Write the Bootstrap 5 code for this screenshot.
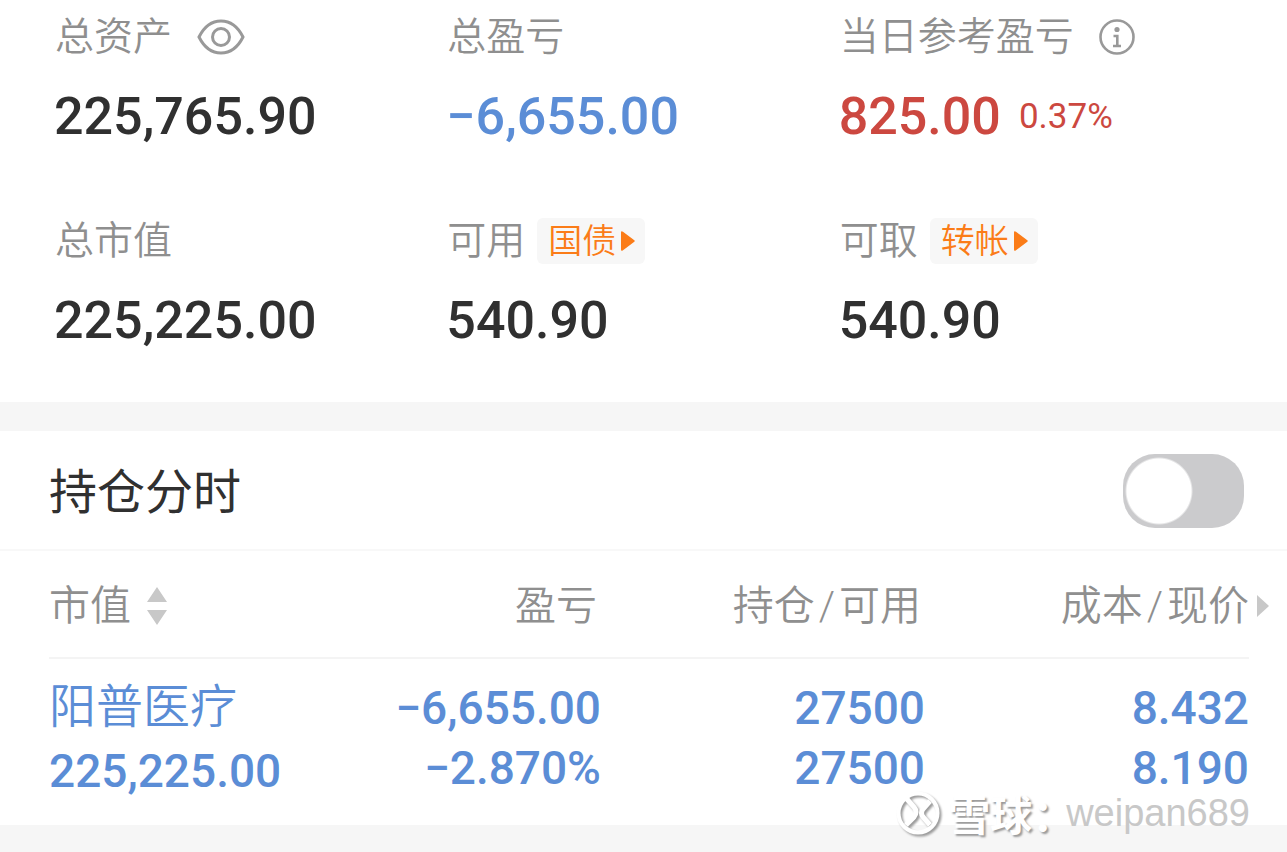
<!DOCTYPE html>
<html lang="zh-CN">
<head>
<meta charset="utf-8">
<meta name="viewport" content="width=device-width, initial-scale=1">
<title>持仓</title>
<link href="https://cdn.jsdelivr.net/npm/bootstrap@5.3.0/dist/css/bootstrap.min.css" rel="stylesheet">
<style>
  :root { --ink: #303030; --muted: #8f8f8f; --loss: #5b8dd6; --gain: #cc4840; --accent: #fb7c18; --band: #f6f6f6; }
  body { background: var(--band); color: var(--ink); font-family: Roboto, "Noto Sans CJK SC", sans-serif; }
  .overview { padding: 12px 55px 49px; }
  .overview .row { row-gap: 67px; }
  .caption { font-size: 39px; line-height: 50px; font-weight: 350; color: var(--muted); white-space: nowrap; }
  .amount { font-size: 52px; line-height: 64px; font-weight: 500; margin-top: 23px; margin-left: -1px; white-space: nowrap; }
  .amount-rate { font-size: 35px; font-weight: 400; margin-left: 18px; }
  .loss { color: var(--loss); }
  .gain { color: var(--gain); }
  .icon-btn { border: 0; padding: 0; background: none; display: flex; margin-left: 25px; }
  .tag-btn { border: 0; background: #f7f7f7; color: var(--accent); border-radius: 6px; font-size: 34px; line-height: 46px; font-weight: 350; padding: 0 10px 0 11px; margin-left: 12px; display: flex; align-items: center; gap: 5px; }
  .holdings { margin-top: 29px; }
  .chart-row { padding: 0 43px 0 49px; height: 120px; border-bottom: 2px solid #f8f8f8; }
  .chart-row label { font-size: 48px; line-height: 64px; padding-top: 6px; }
  .chart-row .form-check-input { width: 121px; height: 74px; margin: 2px 0 0; border: 0; background-color: #cbcbcd; background-size: auto;
    background-image: radial-gradient(circle at 36px 37px, #fff 32px, #cbcbcd 34px); box-shadow: none; }
  .chart-row .form-check-input:checked { background-color: var(--loss); background-image: radial-gradient(circle at 84px 37px, #fff 32px, var(--loss) 34px); }
  .holding-area { padding: 0 38px 0 49px; }
  .holding-table { table-layout: fixed; width: 100%; }
  .holding-table th { font-size: 41px; line-height: 60px; font-weight: 350; color: var(--muted); padding: 25px 0 21px; white-space: nowrap; border-bottom: 2px solid #f4f4f4; }
  .holding-table th.col-profit, .holding-table th.col-count { padding-right: 4px; }
  .holding-table td { font-size: 46px; line-height: 60px; font-weight: 500; color: var(--loss); padding: 19px 0 24px; white-space: nowrap; vertical-align: top; }
  .stock-name { font-size: 47px; font-weight: 350; line-height: 58px; margin-bottom: 5px; color: var(--loss); text-decoration: none; }
  .slash { margin: 0 4px; }
  .col-value { width: 22%; }
  .col-profit { width: 24%; }
  .col-count, .col-price { width: 27%; }
  .more-arrow { top: 44px; right: -20px; }
  .watermark { right: 37px; bottom: -16px; color: #c8c8c8; font: 38px/56px "Liberation Sans", sans-serif; pointer-events: none; }
  .watermark-brand { font: 700 42px/56px "Noto Sans CJK SC", sans-serif; color: #fff; text-shadow: 2px 2px 2px #999; margin: 0 -8px 0 8px; }
  .watermark svg { filter: drop-shadow(2px 2px 1px #999); }
</style>
</head>
<body class="min-vh-100">
<main>
  <section class="overview bg-white">
    <div class="row gx-0">
      <div class="col-4">
        <div class="caption d-flex align-items-center">总资产
          <button class="icon-btn" type="button" aria-label="隐藏金额"><svg width="48" height="36" viewBox="0 0 48 36" fill="none" stroke="#999" stroke-width="3"><path d="M2 18C7 8 15 2 24 2s17 6 22 16C41 28 33 34 24 34S7 28 2 18Z"/><circle cx="24" cy="18" r="8.5"/></svg></button>
        </div>
        <div class="amount">225,765.90</div>
      </div>
      <div class="col-4">
        <div class="caption">总盈亏</div>
        <div class="amount loss">−6,655.00</div>
      </div>
      <div class="col-4">
        <div class="caption d-flex align-items-center">当日参考盈亏
          <button class="icon-btn" type="button" aria-label="说明"><svg width="36" height="36" viewBox="0 0 36 36" fill="none" stroke="#999" stroke-width="2.6"><circle cx="18" cy="18" r="16.5"/><circle cx="18" cy="10.5" r="2.6" fill="#999" stroke="none"/><path d="M14.500 17h3.800v10M14 27h8" stroke-width="2.6"/></svg></button>
        </div>
        <div class="amount gain d-flex align-items-center">825.00<span class="amount-rate">0.37%</span></div>
      </div>
      <div class="col-4">
        <div class="caption">总市值</div>
        <div class="amount">225,225.00</div>
      </div>
      <div class="col-4">
        <div class="caption d-flex align-items-center">可用
          <button class="tag-btn" type="button">国债<svg width="14" height="20" viewBox="0 0 14 20" fill="#fb7c18"><path d="M0 1.500Q0-.5 2 .8L13 9q1.500 1 0 2L2 19.200Q0 20.500 0 18.500Z"/></svg></button>
        </div>
        <div class="amount">540.90</div>
      </div>
      <div class="col-4">
        <div class="caption d-flex align-items-center">可取
          <button class="tag-btn" type="button">转帐<svg width="14" height="20" viewBox="0 0 14 20" fill="#fb7c18"><path d="M0 1.500Q0-.5 2 .8L13 9q1.500 1 0 2L2 19.200Q0 20.500 0 18.500Z"/></svg></button>
        </div>
        <div class="amount">540.90</div>
      </div>
    </div>
  </section>

  <section class="holdings bg-white">
    <div class="chart-row d-flex align-items-center justify-content-between">
      <label for="intraday">持仓分时</label>
      <div class="form-switch p-0 d-flex"><input class="form-check-input" type="checkbox" role="switch" id="intraday"></div>
    </div>
    <div class="holding-area position-relative">
      <table class="holding-table">
        <thead>
          <tr>
            <th class="col-value" scope="col"><span class="d-flex align-items-center">市值<svg class="ms-3" width="20" height="38" viewBox="0 0 20 38" fill="#c8c8c8"><path d="M10 0 20 15H0ZM0 23h20L10 38Z"/></svg></span></th>
            <th class="col-profit text-end" scope="col">盈亏</th>
            <th class="col-count text-end" scope="col">持仓<span class="slash">/</span>可用</th>
            <th class="col-price text-end position-relative" scope="col">成本<span class="slash">/</span>现价<svg class="more-arrow position-absolute" width="12" height="22" viewBox="0 0 12 22" fill="#c8c8c8"><path d="M0 0 12 11 0 22Z"/></svg></th>
          </tr>
        </thead>
        <tbody>
          <tr>
            <td><a class="stock-name d-block" href="#">阳普医疗</a>225,225.00</td>
            <td class="text-end">−6,655.00<br>−2.870%</td>
            <td class="text-end">27500<br>27500</td>
            <td class="text-end">8.432<br>8.190</td>
          </tr>
        </tbody>
      </table>
      <div class="watermark position-absolute d-flex align-items-center">
        <svg width="44" height="44" viewBox="0 0 44 44" fill="none" stroke="#fff" stroke-width="4"><circle cx="22" cy="22" r="19.500"/><path d="M10 7l8 9q4 5 0 10l-8 8M34 10l-7 8q-3 4 0 8l7 8" stroke-width="5"/></svg>
        <span class="watermark-brand">雪球：</span><span>weipan689</span>
      </div>
    </div>
  </section>
</main>
<script src="https://cdn.jsdelivr.net/npm/bootstrap@5.3.0/dist/js/bootstrap.bundle.min.js"></script>
</body>
</html>
